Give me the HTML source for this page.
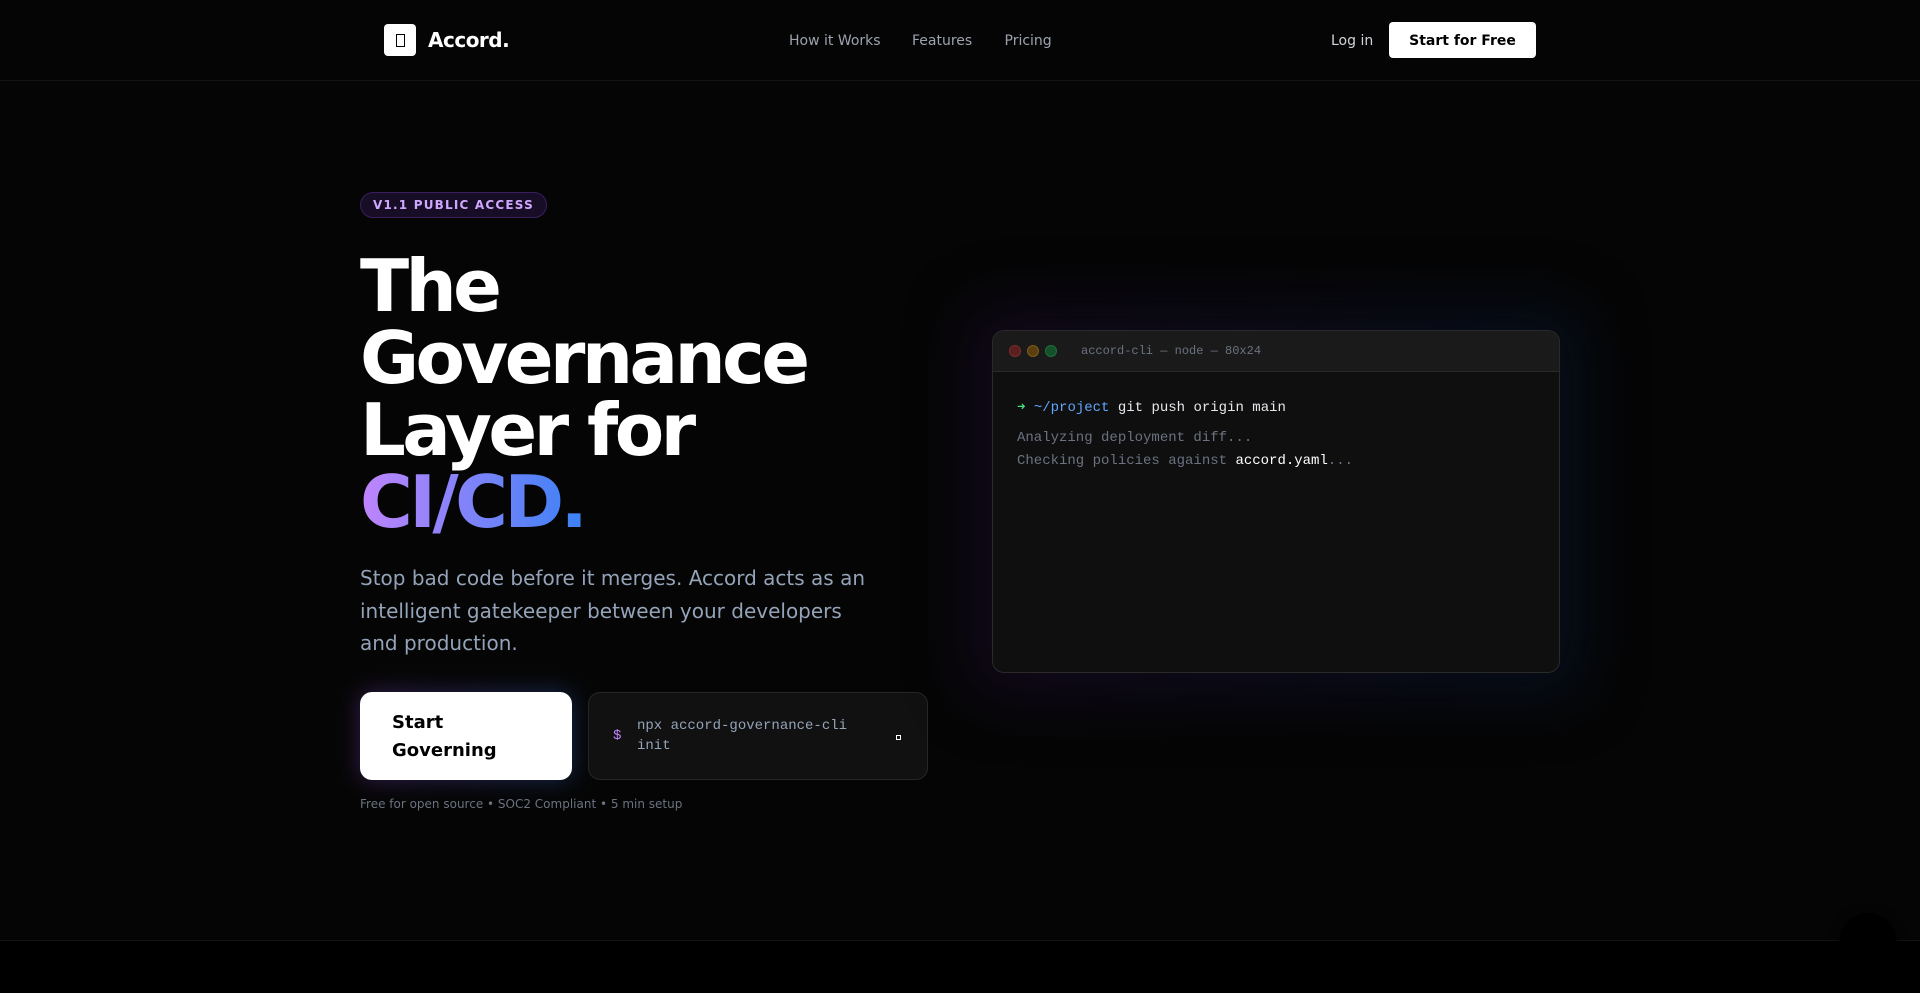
<!DOCTYPE html>
<html lang="en">
<head>
<meta charset="utf-8">
<title>Accord.</title>
<style>
*{box-sizing:border-box;margin:0;padding:0}
html,body{width:1920px;height:993px;overflow:hidden;background:#050505}
body{position:relative;font-family:"DejaVu Sans",sans-serif;color:#fff}
.mono{font-family:"Liberation Mono",monospace}
nav{position:absolute;left:0;top:0;width:1920px;height:81px;border-bottom:1px solid #141414}
.logo{position:absolute;left:384px;top:24px;width:32px;height:32px;background:#fff;border-radius:4px}
.logo i{position:absolute;left:11.5px;top:10px;width:9px;height:13px;border:1px solid #000}
.brand{position:absolute;left:428px;top:24px;font-size:20px;line-height:32px;font-weight:700;letter-spacing:-.5px}
.link{position:absolute;top:31px;font-size:14px;line-height:20px;color:#9ca3af}
.login{position:absolute;left:1331px;top:31px;font-size:14px;line-height:20px;color:#d1d5db}
.cta{position:absolute;left:1389px;top:22px;width:147px;height:36px;background:#fff;border-radius:4px;color:#000;font-size:14px;font-weight:700;line-height:38px;text-align:center}
.badge{position:absolute;left:360px;top:192px;width:187px;height:26px;border:1px solid #3a1f5f;border-radius:13px;background:#170d26;color:#cfa8fe;font-size:12px;font-weight:700;line-height:24px;letter-spacing:1.2px;padding-left:12px;white-space:nowrap}
h1{position:absolute;left:360px;top:250px;width:568px;font-size:72px;line-height:72px;font-weight:700;letter-spacing:-3.6px}
h1 span{background:linear-gradient(to right,#c084fc,#3b82f6);-webkit-background-clip:text;background-clip:text;color:transparent}
.sub{position:absolute;left:360px;top:562px;width:520px;font-size:20px;line-height:32.5px;color:#94a3b8}
.btnglow{position:absolute;left:360px;top:692px;width:212px;height:88px;border-radius:12px;background:linear-gradient(to right,#a855f7,#3b82f6);filter:blur(12px);opacity:.3}
.btn{position:absolute;left:360px;top:692px;width:212px;height:88px;border-radius:12px;background:#fff;color:#000;font-size:18px;line-height:28px;font-weight:700;padding:17px 32px}
.cli{position:absolute;left:588px;top:692px;width:340px;height:88px;border-radius:12px;background:#111;border:1px solid #262626}
.cli .d{position:absolute;left:24px;top:33px;font-size:14px;line-height:20px;color:#c084fc}
.cli .t{position:absolute;left:48px;top:23px;width:230px;font-size:14px;line-height:20px;color:#94a3b8}
.cli i{position:absolute;left:307px;top:42px;width:5px;height:5px;border:1px solid #fff}
.note{position:absolute;left:360px;top:796px;font-size:12px;line-height:16px;color:#6b7280}
.shade{position:absolute;left:992px;top:330px;width:568px;height:343px;border-radius:12px;box-shadow:0 0 60px 22px #000}
.glow{position:absolute;left:970px;top:308px;width:612px;height:387px;border-radius:24px;background:linear-gradient(to right,#a855f7,#3b82f6);filter:blur(30px);opacity:.11}
.term{position:absolute;left:992px;top:330px;width:568px;height:343px;border-radius:12px;background:#0f0f0f;border:1px solid #2a2a2a;overflow:hidden}
.bar{position:absolute;left:0;top:0;width:566px;height:41px;background:#1a1a1a;border-bottom:1px solid #2a2a2a}
.dot{position:absolute;top:14px;width:12px;height:12px;border-radius:50%;border:1px solid}
.title{position:absolute;left:88px;top:12px;font-size:12px;line-height:16px;color:#6b7280;white-space:pre}
.l{position:absolute;left:24px;font-size:14px;line-height:20px;white-space:pre;color:#6b7280}
.foot{position:absolute;left:0;top:940px;width:1920px;height:53px;background:#000;border-top:1px solid #141414}
.fab{position:absolute;left:1840px;top:913px;width:56px;height:56px;border-radius:50%;background:#000;box-shadow:0 4px 12px #000}
</style>
</head>
<body>
<nav>
  <div class="logo"><i></i></div>
  <div class="brand">Accord.</div>
  <div class="link" style="left:789px">How it Works</div>
  <div class="link" style="left:912px">Features</div>
  <div class="link" style="left:1004.5px">Pricing</div>
  <div class="login">Log in</div>
  <div class="cta">Start for Free</div>
</nav>
<div class="badge">V1.1 PUBLIC ACCESS</div>
<h1>The Governance Layer for <span>CI/CD.</span></h1>
<p class="sub">Stop bad code before it merges. Accord acts as an intelligent gatekeeper between your developers and production.</p>
<div class="btnglow"></div>
<div class="btn">Start Governing</div>
<div class="cli mono"><span class="d">$</span><span class="t">npx accord-governance-cli init</span><i></i></div>
<div class="note">Free for open source • SOC2 Compliant • 5 min setup</div>
<div class="shade"></div>
<div class="glow"></div>
<div class="term mono">
  <div class="bar">
    <span class="dot" style="left:16px;background:#5a2020;border-color:#7f2a2a"></span>
    <span class="dot" style="left:34px;background:#5a4010;border-color:#7f5a14"></span>
    <span class="dot" style="left:52px;background:#14502a;border-color:#1c7038"></span>
    <span class="title">accord-cli — node — 80x24</span>
  </div>
  <div class="l" style="top:67px;color:#e5e7eb"><span style="color:#4ade80">➜</span> <span style="color:#60a5fa">~/project</span> git push origin main</div>
  <div class="l" style="top:97px">Analyzing deployment diff...</div>
  <div class="l" style="top:120px">Checking policies against <span style="color:#fff">accord.yaml</span>...</div>
</div>
<div class="foot"></div>
<div class="fab"></div>
</body>
</html>
